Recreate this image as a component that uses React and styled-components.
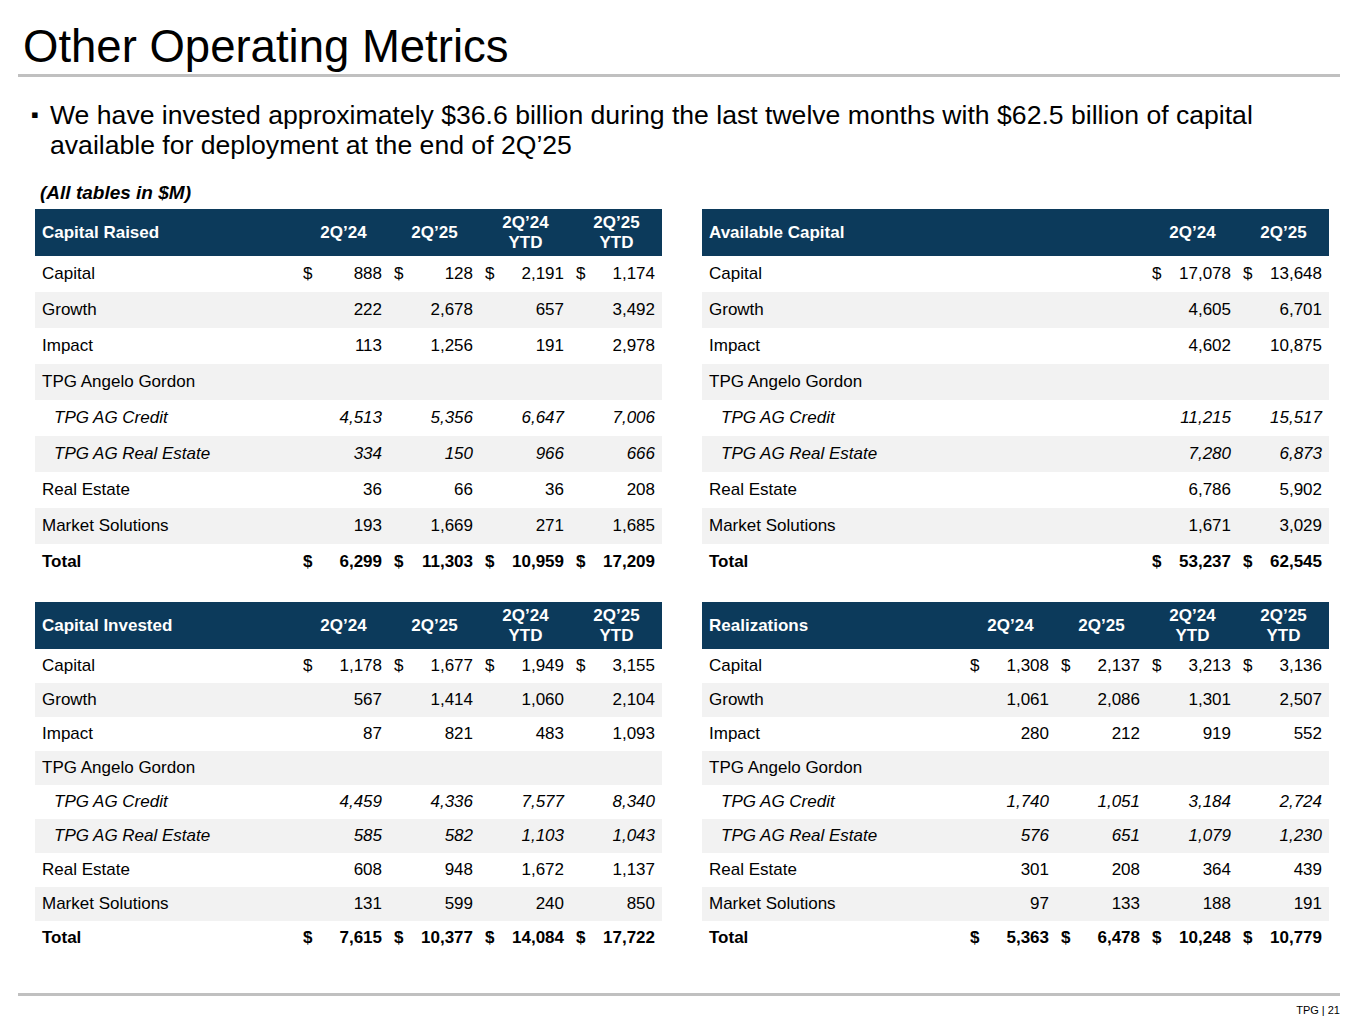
import React from 'react';
import styled, { createGlobalStyle } from 'styled-components';

const GlobalStyle = createGlobalStyle`
  html, body {
    margin: 0;
    padding: 0;
    background: #ffffff;
  }
  body {
    font-family: "Liberation Sans", Arial, sans-serif;
    color: #000;
  }
`;

// Slide frame
const Page = styled.div`
  width: 1365px;
  height: 1024px;
  display: flex;
  flex-direction: column;
  box-sizing: border-box;
  overflow: hidden;
`;

const TitleBar = styled.div`
  margin: 21px 25px 0 18px;
  padding: 0 0 1px 5px;
  border-bottom: 3px solid #c0c0c0;
`;

const Title = styled.h1`
  margin: 0;
  font-size: 45.5px;
  line-height: 52px;
  font-weight: normal;
`;

const Bullet = styled.div`
  display: flex;
  margin: 23px 0 0 31px;
  width: 1290px;
  font-size: 26.6px;
  line-height: 30px;
`;

const BulletMark = styled.span`
  flex: 0 0 19px;
  font-size: 22px;
  line-height: 30px;
`;

const Note = styled.div`
  margin: 22px 0 0 40px;
  font-size: 19px;
  line-height: 22px;
  font-weight: bold;
  font-style: italic;
`;

const Grid = styled.div`
  margin: 5px 0 0 35px;
  display: grid;
  grid-template-columns: 627px 627px;
  column-gap: 40px;
  row-gap: 22px;
  align-items: start;
`;

// Table parts
const Table = styled.table`
  width: 100%;
  border-collapse: collapse;
  table-layout: fixed;
  font-size: 17px;
`;

const HeadCell = styled.th`
  height: 47px;
  padding: 0 ${p => (p.$label ? '7px' : '0')};
  background: #0c3a5b;
  color: #ffffff;
  font-weight: bold;
  font-size: 17px;
  line-height: 20px;
  text-align: ${p => (p.$label ? 'left' : 'center')};
  vertical-align: middle;
`;

const Row = styled.tr`
  height: ${p => p.$h}px;
  background: ${p => (p.$shade ? '#f2f2f2' : '#ffffff')};
  font-weight: ${p => (p.$total ? 'bold' : 'normal')};
`;

const LabelCell = styled.td`
  padding: 0 0 0 ${p => (p.$sub ? '19px' : '7px')};
  font-style: ${p => (p.$sub ? 'italic' : 'normal')};
  white-space: nowrap;
  vertical-align: middle;
`;

const ValueCell = styled.td`
  padding: 0;
  vertical-align: middle;
`;

const Amount = styled.div`
  display: flex;
  justify-content: space-between;
  padding: 0 7px 0 5px;
  font-style: ${p => (p.$sub ? 'italic' : 'normal')};
`;

const Footer = styled.div`
  margin: auto 25px 0 18px;
  border-top: 3px solid #c0c0c0;
  padding: 8px 0 7px;
  text-align: right;
  font-size: 11px;
  line-height: 13px;
  color: #000;
`;

const AG = 'TPG Angelo Gordon';

const tables = [
  {
    title: 'Capital Raised',
    cols: ['2Q’24', '2Q’25', ['2Q’24', 'YTD'], ['2Q’25', 'YTD']],
    rowH: 36,
    rows: [
      ['Capital', ['888', '128', '2,191', '1,174'], 'dollar'],
      ['Growth', ['222', '2,678', '657', '3,492']],
      ['Impact', ['113', '1,256', '191', '2,978']],
      [AG, []],
      ['TPG AG Credit', ['4,513', '5,356', '6,647', '7,006'], 'sub'],
      ['TPG AG Real Estate', ['334', '150', '966', '666'], 'sub'],
      ['Real Estate', ['36', '66', '36', '208']],
      ['Market Solutions', ['193', '1,669', '271', '1,685']],
      ['Total', ['6,299', '11,303', '10,959', '17,209'], 'total'],
    ],
  },
  {
    title: 'Available Capital',
    cols: ['2Q’24', '2Q’25'],
    rowH: 36,
    rows: [
      ['Capital', ['17,078', '13,648'], 'dollar'],
      ['Growth', ['4,605', '6,701']],
      ['Impact', ['4,602', '10,875']],
      [AG, []],
      ['TPG AG Credit', ['11,215', '15,517'], 'sub'],
      ['TPG AG Real Estate', ['7,280', '6,873'], 'sub'],
      ['Real Estate', ['6,786', '5,902']],
      ['Market Solutions', ['1,671', '3,029']],
      ['Total', ['53,237', '62,545'], 'total'],
    ],
  },
  {
    title: 'Capital Invested',
    cols: ['2Q’24', '2Q’25', ['2Q’24', 'YTD'], ['2Q’25', 'YTD']],
    rowH: 34,
    rows: [
      ['Capital', ['1,178', '1,677', '1,949', '3,155'], 'dollar'],
      ['Growth', ['567', '1,414', '1,060', '2,104']],
      ['Impact', ['87', '821', '483', '1,093']],
      [AG, []],
      ['TPG AG Credit', ['4,459', '4,336', '7,577', '8,340'], 'sub'],
      ['TPG AG Real Estate', ['585', '582', '1,103', '1,043'], 'sub'],
      ['Real Estate', ['608', '948', '1,672', '1,137']],
      ['Market Solutions', ['131', '599', '240', '850']],
      ['Total', ['7,615', '10,377', '14,084', '17,722'], 'total'],
    ],
  },
  {
    title: 'Realizations',
    cols: ['2Q’24', '2Q’25', ['2Q’24', 'YTD'], ['2Q’25', 'YTD']],
    rowH: 34,
    rows: [
      ['Capital', ['1,308', '2,137', '3,213', '3,136'], 'dollar'],
      ['Growth', ['1,061', '2,086', '1,301', '2,507']],
      ['Impact', ['280', '212', '919', '552']],
      [AG, []],
      ['TPG AG Credit', ['1,740', '1,051', '3,184', '2,724'], 'sub'],
      ['TPG AG Real Estate', ['576', '651', '1,079', '1,230'], 'sub'],
      ['Real Estate', ['301', '208', '364', '439']],
      ['Market Solutions', ['97', '133', '188', '191']],
      ['Total', ['5,363', '6,478', '10,248', '10,779'], 'total'],
    ],
  },
];

const MetricsTable = ({ title, cols, rows, rowH }) => (
  <Table>
    <colgroup>
      <col />
      {cols.map((_, i) => (
        <col key={i} style={{ width: 91 }} />
      ))}
    </colgroup>
    <thead>
      <tr>
        <HeadCell $label>{title}</HeadCell>
        {cols.map((c, i) => (
          <HeadCell key={i}>
            {Array.isArray(c) ? (
              <>
                {c[0]}
                <br />
                {c[1]}
              </>
            ) : (
              c
            )}
          </HeadCell>
        ))}
      </tr>
    </thead>
    <tbody>
      {rows.map(([label, values, kind], r) => {
        const sub = kind === 'sub';
        const dollar = kind === 'dollar' || kind === 'total';
        return (
          <Row key={label + r} $h={rowH} $shade={r % 2 === 1} $total={kind === 'total'}>
            <LabelCell $sub={sub}>{label}</LabelCell>
            {cols.map((_, i) => (
              <ValueCell key={i}>
                {values[i] && (
                  <Amount $sub={sub}>
                    <span>{dollar ? '$' : ''}</span>
                    <span>{values[i]}</span>
                  </Amount>
                )}
              </ValueCell>
            ))}
          </Row>
        );
      })}
    </tbody>
  </Table>
);

export default function App() {
  return (
    <Page>
      <GlobalStyle />
      <TitleBar>
        <Title>Other Operating Metrics</Title>
      </TitleBar>
      <Bullet>
        <BulletMark>▪</BulletMark>
        <span>
          We have invested approximately $36.6 billion during the last twelve months with $62.5
          billion of capital available for deployment at the end of 2Q’25
        </span>
      </Bullet>
      <Note>(All tables in $M)</Note>
      <Grid>
        {tables.map(t => (
          <MetricsTable key={t.title} {...t} />
        ))}
      </Grid>
      <Footer>TPG | 21</Footer>
    </Page>
  );
}
